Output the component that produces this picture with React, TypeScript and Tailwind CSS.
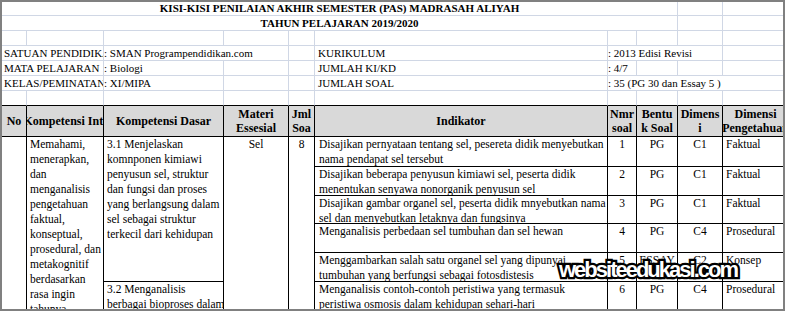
import React from "react";

const grid = "border-[#d0d7e5]";

const cols = "grid grid-cols-[25px_77px_120px_65px_26px_293px_29px_41px_45px_66px]";

type Row = {
  ind: string[];
  no: string;
  bentuk: string;
  dim: string;
  dimP: string;
};

const rows: Row[] = [
  {
    ind: ["Disajikan pernyataan tentang sel, pesereta didik menyebutkan", "nama pendapat sel tersebut"],
    no: "1",
    bentuk: "PG",
    dim: "C1",
    dimP: "Faktual",
  },
  {
    ind: ["Disajikan beberapa penyusun kimiawi sel, peserta didik", "menentukan senyawa nonorganik penyusun sel"],
    no: "2",
    bentuk: "PG",
    dim: "C1",
    dimP: "Faktual",
  },
  {
    ind: ["Disajikan gambar organel sel, peserta didik mnyebutkan nama", "sel dan menyebutkan letaknya dan fungsinya"],
    no: "3",
    bentuk: "PG",
    dim: "C1",
    dimP: "Faktual",
  },
  {
    ind: ["Menganalisis perbedaan sel tumbuhan dan sel hewan"],
    no: "4",
    bentuk: "PG",
    dim: "C4",
    dimP: "Prosedural",
  },
  {
    ind: ["Menggambarkan salah satu organel sel yang dipunyai", "tumbuhan yang berfungsi sebagai fotosdistesis"],
    no: "5",
    bentuk: "ESSAY",
    dim: "C2",
    dimP: "Konsep",
  },
  {
    ind: ["Menganalisis contoh-contoh peristiwa yang termasuk", "peristiwa osmosis dalam kehidupan sehari-hari"],
    no: "6",
    bentuk: "PG",
    dim: "C4",
    dimP: "Prosedural",
  },
];

const rowStart = ["row-start-1", "row-start-2", "row-start-3", "row-start-4", "row-start-5", "row-start-6"];

function InfoLabel({ children }: { children: React.ReactNode }) {
  return (
    <div className={`col-span-2 border-r border-b ${grid} pl-[2px] overflow-hidden whitespace-nowrap`}>
      {children}
    </div>
  );
}

function G({ span = "", children, b = true }: { span?: string; children?: React.ReactNode; b?: boolean }) {
  return (
    <div className={`${span} ${b ? "border-r" : ""} border-b ${grid} overflow-hidden whitespace-nowrap`}>
      {children}
    </div>
  );
}

function Lines({ text }: { text: string }) {
  return (
    <>
      {text.split("\n").map((l) => (
        <div key={l} className="whitespace-nowrap">
          {l}
        </div>
      ))}
    </>
  );
}

export default function App() {
  return (
    <div className="w-[785px] h-[311px] bg-[#808080] p-[2px] [font-family:'Liberation_Serif',serif] text-[11.5px] text-black">
      <div className="relative w-[781px] h-[307px] bg-white overflow-hidden">
        {/* sheet heading */}
        <div className={`${cols} grid-rows-[14px_15px_15px_15px_15px_15px_15px] leading-[15px] text-[11px]`}>
          <div className={`col-span-8 border-r border-b ${grid} text-center font-bold leading-[13px]`}>
            KISI-KISI PENILAIAN AKHIR SEMESTER (PAS) MADRASAH ALIYAH
          </div>
          <G />
          <G b={false} />
          <div className={`col-span-8 border-r border-b ${grid} text-center font-bold leading-[14px]`}>
            TAHUN PELAJARAN 2019/2020
          </div>
          <G />
          <G b={false} />

          {Array.from({ length: 9 }).map((_, i) => (
            <G key={i} />
          ))}
          <G b={false} />

          <InfoLabel>SATUAN PENDIDIKAN</InfoLabel>
          <G span="col-span-2">: SMAN Programpendidikan.com</G>
          <G />
          <G>
            <span className="pl-[3px]">KURIKULUM</span>
          </G>
          <G span="col-span-3">: 2013 Edisi Revisi</G>
          <G b={false} />

          <InfoLabel>MATA PELAJARAN</InfoLabel>
          <G>: Biologi</G>
          <G />
          <G />
          <G>
            <span className="pl-[3px]">JUMLAH KI/KD</span>
          </G>
          <G>: 4/7</G>
          <G />
          <G />
          <G b={false} />

          <InfoLabel>KELAS/PEMINATAN</InfoLabel>
          <G>: XI/MIPA</G>
          <G />
          <G />
          <G>
            <span className="pl-[3px]">JUMLAH SOAL</span>
          </G>
          <G span="col-span-4" b={false}>
            : 35 (PG 30 dan Essay 5 )
          </G>

          {Array.from({ length: 10 }).map((_, i) => (
            <div key={i} className={`border-b border-b-black ${i < 9 ? `border-r ${grid}` : ""}`} />
          ))}
        </div>

        {/* table header */}
        <div className={`${cols} h-[31px] bg-[#d9d9d9] font-bold text-[12px] leading-[14.5px] border-b border-black`}>
          {[
            ["No"],
            ["Kompetensi Inti"],
            ["Kompetensi Dasar"],
            ["Materi", "Essesial"],
            ["Jml", "Soa"],
            ["Indikator"],
            ["Nmr", "soal"],
            ["Bentu", "k Soal"],
            ["Dimens", "i"],
            ["Dimensi", "Pengetahuan"],
          ].map((lines, i) => (
            <div
              key={i}
              className="border-r border-black flex flex-col justify-center items-center overflow-hidden whitespace-nowrap"
            >
              {lines.map((l) => (
                <span key={l}>{l}</span>
              ))}
            </div>
          ))}
        </div>

        {/* table body */}
        <div className={`${cols} grid-rows-[30px_29px_28px_29px_29px_29px]`}>
          <div className="col-start-1 row-start-1 row-span-6 border-r border-black" />
          <div className="col-start-2 row-start-1 row-span-6 border-r border-black pl-[3px] leading-[15px] overflow-hidden">
            <Lines
              text={
                "Memahami,\nmenerapkan,\ndan\nmenganalisis\npengetahuan\nfaktual,\nkonseptual,\nprosedural, dan\nmetakognitif\nberdasarkan\nrasa ingin\ntahunya"
              }
            />
          </div>
          <div className="col-start-3 row-start-1 row-span-5 border-r border-b border-black pl-[3px] leading-[15px] overflow-hidden">
            <Lines
              text={
                "3.1 Menjelaskan\nkomnponen kimiawi\npenyusun sel, struktur\ndan fungsi dan proses\nyang berlangsung dalam\nsel sebagai struktur\nterkecil dari kehidupan"
              }
            />
          </div>
          <div className="col-start-3 row-start-6 border-r border-black pl-[3px] leading-[15px] overflow-hidden">
            <Lines text={"3.2 Menganalisis\nberbagai bioproses dalam"} />
          </div>
          <div className="col-start-4 row-start-1 row-span-6 border-r border-black text-center leading-[15px]">
            Sel
          </div>
          <div className="col-start-5 row-start-1 row-span-6 border-r border-black text-center leading-[15px]">
            8
          </div>

          {rows.map((r, i) => (
            <React.Fragment key={r.no}>
              <div
                className={`col-start-6 ${rowStart[i]} border-r border-b border-black pl-[4px] leading-[14.5px] whitespace-nowrap overflow-hidden`}
              >
                {r.ind.map((l) => (
                  <div key={l}>{l}</div>
                ))}
              </div>
              <div className={`col-start-7 ${rowStart[i]} border-r border-b border-black text-center leading-[14.5px]`}>
                {r.no}
              </div>
              <div className={`col-start-8 ${rowStart[i]} border-r border-b border-black text-center leading-[14.5px]`}>
                {r.bentuk}
              </div>
              <div className={`col-start-9 ${rowStart[i]} border-r border-b border-black text-center leading-[14.5px]`}>
                {r.dim}
              </div>
              <div className={`col-start-10 ${rowStart[i]} border-b border-black pl-[3px] leading-[14.5px]`}>
                {r.dimP}
              </div>
            </React.Fragment>
          ))}
        </div>

        {/* watermark */}
        <div className="absolute left-[557px] top-[257px] [font-family:'Liberation_Sans',sans-serif] font-bold text-[22px] tracking-[-2px] text-white [-webkit-text-stroke:4.5px_black] [paint-order:stroke_fill] leading-none">
          websiteedukasi.com
        </div>
      </div>
    </div>
  );
}
